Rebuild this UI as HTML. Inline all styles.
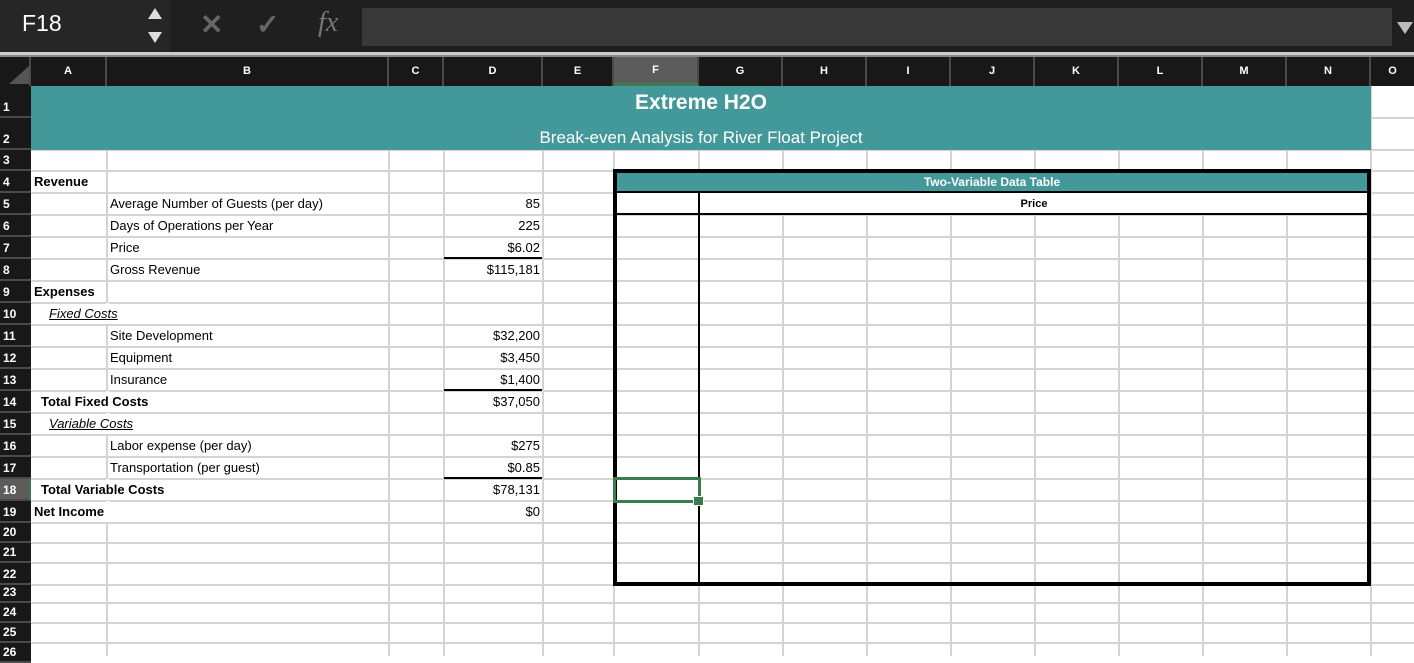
<!DOCTYPE html>
<html><head><meta charset="utf-8"><style>
*{margin:0;padding:0;box-sizing:border-box}
body{width:1414px;height:656px;overflow:hidden;background:#fff;position:relative;font-family:"Liberation Sans",sans-serif}
div{position:absolute}
.v{width:2px;background:#d4d4d4;top:86px;height:570px}
.h{height:2px;background:#d4d4d4;left:31px;width:1383px}
.ch{top:57px;height:29px;color:#fff;font-size:11px;font-weight:bold;text-align:center;line-height:29px;border-right:2px solid #4a4a4a;background:#181818}
.rh{left:0;width:31px;color:#fff;font-size:12px;font-weight:bold;padding-left:3px;background:#181818;border-bottom:2px solid #4a4a4a;display:flex;align-items:flex-end;padding-bottom:2px}
.t{font-size:13px;color:#000;height:20px;line-height:20px;white-space:nowrap}
.n{font-size:13px;color:#000;height:20px;line-height:20px;text-align:right;left:444px;width:96px}
.w{background:#fff}
</style></head><body>
<div style="left:0;top:0;width:1414px;height:52px;background:#1f1f1f"></div>
<div style="left:0;top:0;width:170px;height:52px;background:#262626"></div>
<div style="left:22px;top:10px;color:#fff;font-size:23px;">F18</div>
<div style="left:148px;top:8px;width:0;height:0;border-left:7px solid transparent;border-right:7px solid transparent;border-bottom:11px solid #ddd"></div>
<div style="left:148px;top:32px;width:0;height:0;border-left:7px solid transparent;border-right:7px solid transparent;border-top:11px solid #ddd"></div>
<div style="left:200px;top:8px;color:#666;font-size:28px;font-weight:bold">✕</div>
<div style="left:256px;top:8px;color:#666;font-size:28px;font-weight:bold">✓</div>
<div style="left:318px;top:7px;color:#777;font-size:28px;font-style:italic;font-family:'Liberation Serif',serif">fx</div>
<div style="left:362px;top:8px;width:1030px;height:38px;background:#383838"></div>
<div style="left:1397px;top:22px;width:0;height:0;border-left:8px solid transparent;border-right:8px solid transparent;border-top:12px solid #bbb"></div>
<div style="left:0;top:52px;width:1414px;height:5px;background:#ccc"></div>
<div style="left:0;top:55px;width:1414px;height:2px;background:#888"></div>
<div class="ch" style="left:0;width:31px"></div>
<div style="left:9px;top:66px;width:0;height:0;border-left:20px solid transparent;border-bottom:18px solid #555"></div>
<div class="ch" style="left:31px;width:76px">A</div>
<div class="ch" style="left:107px;width:282px">B</div>
<div class="ch" style="left:389px;width:55px">C</div>
<div class="ch" style="left:444px;width:99px">D</div>
<div class="ch" style="left:543px;width:71px">E</div>
<div class="ch" style="left:614px;width:85px;background:#5c5c5c;border-bottom:3px solid #3c7a4f;line-height:27px">F</div>
<div class="ch" style="left:699px;width:84px">G</div>
<div class="ch" style="left:783px;width:84px">H</div>
<div class="ch" style="left:867px;width:84px">I</div>
<div class="ch" style="left:951px;width:84px">J</div>
<div class="ch" style="left:1035px;width:84px">K</div>
<div class="ch" style="left:1119px;width:84px">L</div>
<div class="ch" style="left:1203px;width:84px">M</div>
<div class="ch" style="left:1287px;width:84px">N</div>
<div class="ch" style="left:1371px;width:43px;border-right:none">O</div>
<div class="v" style="left:106px"></div><div class="v" style="left:388px"></div><div class="v" style="left:443px"></div>
<div class="v" style="left:542px"></div><div class="v" style="left:613px"></div><div class="v" style="left:698px"></div>
<div class="v" style="left:782px"></div><div class="v" style="left:866px"></div><div class="v" style="left:950px"></div>
<div class="v" style="left:1034px"></div><div class="v" style="left:1118px"></div><div class="v" style="left:1202px"></div>
<div class="v" style="left:1286px"></div><div class="v" style="left:1370px"></div>
<div class="h" style="top:117px"></div><div class="h" style="top:149px"></div><div class="h" style="top:170px"></div>
<div class="h" style="top:192px"></div><div class="h" style="top:214px"></div><div class="h" style="top:236px"></div>
<div class="h" style="top:258px"></div><div class="h" style="top:280px"></div><div class="h" style="top:302px"></div>
<div class="h" style="top:324px"></div><div class="h" style="top:346px"></div><div class="h" style="top:368px"></div>
<div class="h" style="top:390px"></div><div class="h" style="top:412px"></div><div class="h" style="top:434px"></div>
<div class="h" style="top:456px"></div><div class="h" style="top:478px"></div><div class="h" style="top:500px"></div>
<div class="h" style="top:522px"></div><div class="h" style="top:542px"></div><div class="h" style="top:562px"></div>
<div class="h" style="top:584px"></div><div class="h" style="top:602px"></div><div class="h" style="top:622px"></div>
<div class="h" style="top:642px"></div>
<div class="rh" style="top:86px;height:32px">1</div>
<div class="rh" style="top:118px;height:32px">2</div>
<div class="rh" style="top:150px;height:21px">3</div>
<div class="rh" style="top:171px;height:22px">4</div>
<div class="rh" style="top:193px;height:22px">5</div>
<div class="rh" style="top:215px;height:22px">6</div>
<div class="rh" style="top:237px;height:22px">7</div>
<div class="rh" style="top:259px;height:22px">8</div>
<div class="rh" style="top:281px;height:22px">9</div>
<div class="rh" style="top:303px;height:22px">10</div>
<div class="rh" style="top:325px;height:22px">11</div>
<div class="rh" style="top:347px;height:22px">12</div>
<div class="rh" style="top:369px;height:22px">13</div>
<div class="rh" style="top:391px;height:22px">14</div>
<div class="rh" style="top:413px;height:22px">15</div>
<div class="rh" style="top:435px;height:22px">16</div>
<div class="rh" style="top:457px;height:22px">17</div>
<div class="rh" style="top:479px;height:22px;background:#5c5c5c;border-right:2px solid #3c7a4f">18</div>
<div class="rh" style="top:501px;height:22px">19</div>
<div class="rh" style="top:523px;height:20px">20</div>
<div class="rh" style="top:543px;height:20px">21</div>
<div class="rh" style="top:563px;height:22px">22</div>
<div class="rh" style="top:585px;height:18px">23</div>
<div class="rh" style="top:603px;height:20px">24</div>
<div class="rh" style="top:623px;height:20px">25</div>
<div class="rh" style="top:643px;height:20px">26</div>
<div style="left:31px;top:86px;width:1340px;height:64px;background:#43989a"></div>
<div style="left:31px;top:91px;width:1340px;text-align:center;color:#fff;font-size:21px;font-weight:bold">Extreme H2O</div>
<div style="left:31px;top:128px;width:1340px;text-align:center;color:#fff;font-size:17px">Break-even Analysis for River Float Project</div>
<div class="w" style="left:106px;top:303px;width:3px;height:21px"></div>
<div class="w" style="left:106px;top:391px;width:3px;height:21px"></div>
<div class="w" style="left:106px;top:413px;width:3px;height:21px"></div>
<div class="w" style="left:106px;top:479px;width:3px;height:21px"></div>
<div class="w" style="left:106px;top:501px;width:3px;height:21px"></div>
<div class="t" style="left:34px;top:172px;font-weight:bold">Revenue</div>
<div class="t" style="left:110px;top:194px">Average Number of Guests (per day)</div>
<div class="t" style="left:110px;top:216px">Days of Operations per Year</div>
<div class="t" style="left:110px;top:238px">Price</div>
<div class="t" style="left:110px;top:260px">Gross Revenue</div>
<div class="t" style="left:34px;top:282px;font-weight:bold">Expenses</div>
<div class="t" style="left:49px;top:304px;font-style:italic;text-decoration:underline">Fixed Costs</div>
<div class="t" style="left:110px;top:326px">Site Development</div>
<div class="t" style="left:110px;top:348px">Equipment</div>
<div class="t" style="left:110px;top:370px">Insurance</div>
<div class="t" style="left:41px;top:392px;font-weight:bold">Total Fixed Costs</div>
<div class="t" style="left:49px;top:414px;font-style:italic;text-decoration:underline">Variable Costs</div>
<div class="t" style="left:110px;top:436px">Labor expense (per day)</div>
<div class="t" style="left:110px;top:458px">Transportation (per guest)</div>
<div class="t" style="left:41px;top:480px;font-weight:bold">Total Variable Costs</div>
<div class="t" style="left:34px;top:502px;font-weight:bold">Net Income</div>
<div class="n" style="top:194px">85</div>
<div class="n" style="top:216px">225</div>
<div class="n" style="top:238px">$6.02</div>
<div class="n" style="top:260px">$115,181</div>
<div class="n" style="top:326px">$32,200</div>
<div class="n" style="top:348px">$3,450</div>
<div class="n" style="top:370px">$1,400</div>
<div class="n" style="top:392px">$37,050</div>
<div class="n" style="top:436px">$275</div>
<div class="n" style="top:458px">$0.85</div>
<div class="n" style="top:480px">$78,131</div>
<div class="n" style="top:502px">$0</div>
<div style="left:444px;top:257px;width:98px;height:2px;background:#000"></div>
<div style="left:444px;top:389px;width:98px;height:2px;background:#000"></div>
<div style="left:444px;top:477px;width:98px;height:2px;background:#000"></div>
<div style="left:616px;top:172px;width:752px;height:21px;background:#43989a"></div>
<div style="left:616px;top:193px;width:752px;height:21px;background:#fff"></div>
<div style="left:616px;top:175px;width:752px;text-align:center;color:#fff;font-size:12px;font-weight:bold">Two-Variable Data Table</div>
<div style="left:700px;top:198px;width:668px;text-align:center;color:#000;font-size:11px;font-weight:bold">Price</div>
<div style="left:613px;top:169px;width:758px;height:417px;border:4px solid #000"></div>
<div style="left:616px;top:191px;width:752px;height:2px;background:#000"></div>
<div style="left:616px;top:213px;width:752px;height:2px;background:#000"></div>
<div style="left:698px;top:192px;width:2px;height:392px;background:#000"></div>
<div style="left:613px;top:477px;width:88px;height:26px;border:3px solid #3c7a4f"></div>
<div style="left:693px;top:496px;width:11px;height:10px;background:#3c7a4f;border:1px solid #fff"></div>
</body></html>
